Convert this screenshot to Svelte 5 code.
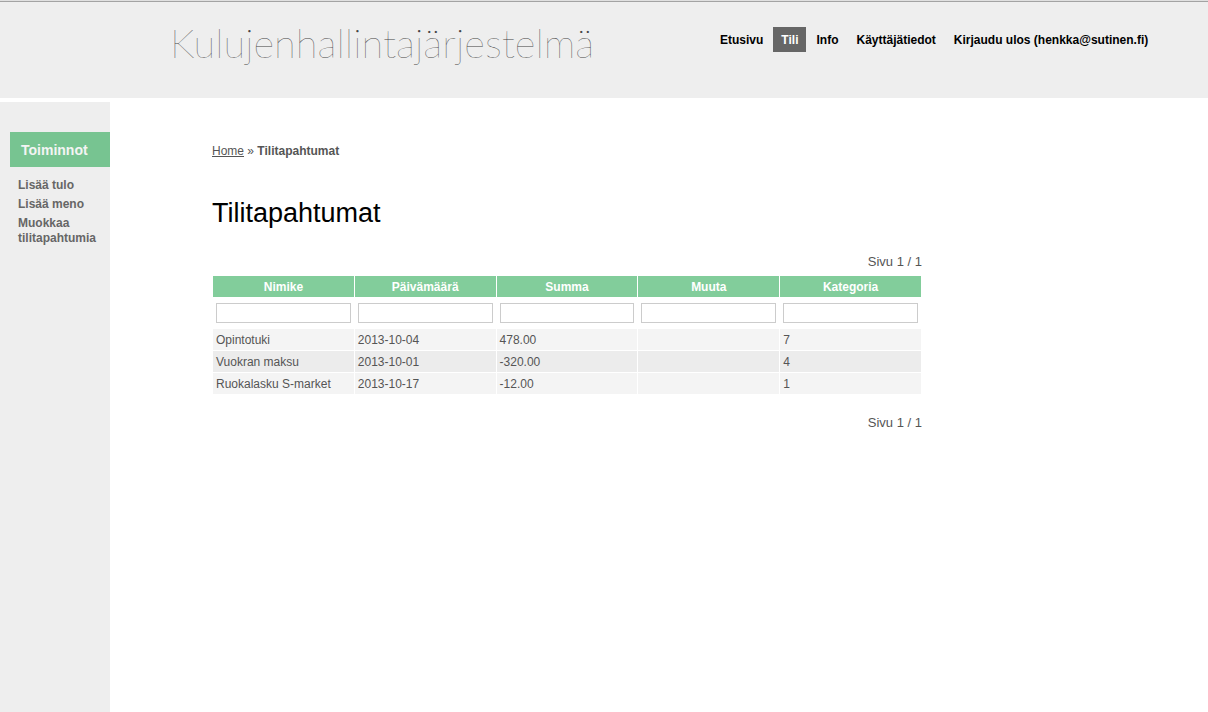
<script>
  const nav = ['Etusivu', 'Tili', 'Info', 'Käyttäjätiedot', 'Kirjaudu ulos (henkka@sutinen.fi)'];
  const actions = ['Lisää tulo', 'Lisää meno', 'Muokkaa tilitapahtumia'];
  const columns = ['Nimike', 'Päivämäärä', 'Summa', 'Muuta', 'Kategoria'];
  const rows = [
    ['Opintotuki', '2013-10-04', '478.00', '', '7'],
    ['Vuokran maksu', '2013-10-01', '-320.00', '', '4'],
    ['Ruokalasku S-market', '2013-10-17', '-12.00', '', '1']
  ];
  let filters = $state(['', '', '', '', '']);
</script>

<div class="page">
  <header>
    <div class="logo">Kulujenhallintajärjestelmä</div>
    <nav>
      {#each nav as item}
        <a href="#top" class:active={item === 'Tili'}>{item}</a>
      {/each}
    </nav>
  </header>
  <div class="body">
    <aside>
      <h2>Toiminnot</h2>
      <ul>
        {#each actions as action}
          <li><a href="#top">{action}</a></li>
        {/each}
      </ul>
    </aside>
    <main>
      <div class="crumbs"><a href="#top">Home</a> » <strong>Tilitapahtumat</strong></div>
      <h1>Tilitapahtumat</h1>
      <div class="summary">Sivu 1 / 1</div>
      <table>
        <thead>
          <tr>
            {#each columns as column}<th scope="col">{column}</th>{/each}
          </tr>
          <tr class="filters">
            {#each columns as column, i}
              <td><input type="text" aria-label={column} bind:value={filters[i]} /></td>
            {/each}
          </tr>
        </thead>
        <tbody>
          {#each rows as row}
            <tr>
              {#each row as cell}<td>{cell}</td>{/each}
            </tr>
          {/each}
        </tbody>
      </table>
      <div class="summary bottom">Sivu 1 / 1</div>
    </main>
  </div>
</div>

<style>
  :global(body) {
    margin: 0;
    background: #fff;
  }
  .page {
    display: flex;
    flex-direction: column;
    min-height: 100vh;
    box-sizing: border-box;
    border-top: 1px solid #e0e0e0;
    font: 12px/15px 'Liberation Sans', Arial, sans-serif;
    color: #555;
  }
  header {
    display: flex;
    align-items: flex-start;
    box-sizing: border-box;
    min-height: 97px;
    padding: 0 24px 0 170px;
    border-top: 1px solid #a3a3a3;
    background: #eee;
  }
  .logo {
    flex: 0 0 542px;
    padding-top: 17px;
    font: 100 40px/48px Lato, sans-serif;
    color: #444;
    white-space: nowrap;
  }
  nav {
    display: flex;
    flex-wrap: wrap;
    gap: 2px;
    padding-top: 25px;
  }
  nav a {
    padding: 6px 8px 4px;
    color: #000;
    font-weight: bold;
    text-decoration: none;
  }
  nav a.active {
    background: #666;
    color: #fff;
  }
  .body {
    display: flex;
    flex: 1;
    margin-top: 4px;
  }
  aside {
    flex: 0 0 110px;
    box-sizing: border-box;
    padding: 30px 0 0 10px;
    background: #eee;
  }
  h2 {
    margin: 0;
    padding: 11px 11px 9px;
    background: #77c491;
    color: #f4f4f4;
    font-size: 14px;
    line-height: 15px;
  }
  ul {
    display: grid;
    gap: 4px;
    margin: 0;
    padding: 11px 8px;
    list-style: none;
  }
  ul a {
    color: #666;
    font-weight: bold;
    text-decoration: none;
  }
  main {
    flex: 0 1 710px;
    padding: 42px 24px 24px 102px;
  }
  .crumbs a {
    color: #555;
  }
  h1 {
    margin: 36px 0 23px;
    color: #000;
    font-size: 27px;
    font-weight: normal;
    line-height: 36px;
  }
  .summary {
    margin-bottom: 5px;
    font-size: 13px;
    line-height: 16px;
    text-align: right;
  }
  .bottom {
    margin-top: 20px;
  }
  table {
    width: 100%;
    table-layout: fixed;
    border-collapse: collapse;
  }
  th,
  td {
    height: 15px;
    padding: 4px 3px 2px;
    border: 1px solid #fff;
    text-align: left;
  }
  th {
    background: #82cd9b;
    color: #fff;
    text-align: center;
  }
  tbody tr {
    background: #f4f4f4;
  }
  tbody tr:nth-child(even) {
    background: #ececec;
  }
  .filters td {
    padding: 5px 3px;
  }
  input {
    display: block;
    box-sizing: border-box;
    width: 100%;
    height: 20px;
    padding: 1px 2px;
    border: 1px solid #ccc;
    background: #fff;
    color: #555;
    font: inherit;
  }
</style>
